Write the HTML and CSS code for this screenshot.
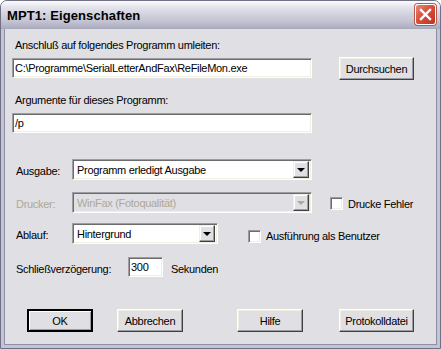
FILE: index.html
```html
<!DOCTYPE html>
<html>
<head>
<meta charset="utf-8">
<link rel="stylesheet" href="styles.css">
</head>
<body>
<div class="window">
  <div class="titlebar">
    <span class="title">MPT1: Eigenschaften</span>
    <span class="close"><svg width="13" height="13" viewBox="0 0 13 13"><path d="M2 2 L11 11 M11 2 L2 11" stroke="#fff" stroke-width="2.4" stroke-linecap="square"/></svg></span>
  </div>
  <div class="content">
    <div class="label l1">Anschluß auf folgendes Programm umleiten:</div>
    <div class="row r1">
      <div class="edit path">C:\Programme\SerialLetterAndFax\ReFileMon.exe</div>
      <div class="btn w75 browse">Durchsuchen</div>
    </div>
    <div class="label l2">Argumente für dieses Programm:</div>
    <div class="row r2"><div class="edit path">/p</div></div>
    <div class="row r3">
      <span class="lbl">Ausgabe:</span>
      <div class="combo long"><span class="val">Programm erledigt Ausgabe</span><span class="drop"><span class="arrow"></span></span></div>
    </div>
    <div class="row r4">
      <span class="lbl disabled">Drucker:</span>
      <div class="combo long off"><span class="val">WinFax (Fotoqualität)</span><span class="drop"><span class="arrow"></span></span></div>
      <span class="check c1"></span><span class="chklbl">Drucke Fehler</span>
    </div>
    <div class="row r5">
      <span class="lbl">Ablauf:</span>
      <div class="combo short"><span class="val">Hintergrund</span><span class="drop"><span class="arrow"></span></span></div>
      <span class="check c2"></span><span class="chklbl">Ausführung als Benutzer</span>
    </div>
    <div class="row r6">
      <span class="lbl">Schließverzögerung:</span>
      <div class="edit num">300</div>
      <span class="unit">Sekunden</span>
    </div>
    <div class="row buttons">
      <div class="btn w66 def">OK</div>
      <div class="btn w66 cancel">Abbrechen</div>
      <div class="btn w66 help">Hilfe</div>
      <div class="btn w75 log">Protokolldatei</div>
    </div>
  </div>
</div>
</body>
</html>
```
FILE: styles.css
```css
* { box-sizing: border-box; }
html, body { margin: 0; padding: 0; background: #fff; }
body { font-family: "Liberation Sans", Arial, sans-serif; font-size: 11px; letter-spacing: -0.3px; color: #000; }

.window {
  width: 441px; height: 349px;
  border: 1px solid #6f6f86;
  border-radius: 7px 7px 0 0;
  background: #e0dfe3;
  display: flex; flex-direction: column;
  overflow: hidden;
}
.titlebar {
  height: 28px; flex: none;
  display: flex; align-items: center; justify-content: space-between;
  padding: 0 4px 0 6px;
  background: linear-gradient(#fdfdfe 0%, #e6e6ee 20%, #d2d2de 50%, #c3c3d2 75%, #aeaec2 100%);
  border-bottom: 1px solid #a9a9bd;
}
.title { font-weight: bold; font-size: 13px; color: #000; letter-spacing: 0.1px; margin-top: 1px; }
.close {
  width: 21px; height: 21px;
  border: 1px solid #fff; border-radius: 3px;
  background: linear-gradient(135deg, #e98a78 0%, #d9503c 45%, #b93422 100%);
  box-shadow: 0 0 0 1px #b45a50;
  display: flex; align-items: center; justify-content: center;
}
.content {
  flex: 1;
  border-left: 3px solid #c4c4d4;
  border-right: 3px solid #c4c4d4;
  border-bottom: 3px solid #c4c4d4;
  box-shadow: inset 1px 0 #8e8ea4, inset -1px 0 #8e8ea4, inset 0 -1px #8e8ea4;
  padding: 10px 0 0 8px;
}
.label { height: 13px; line-height: 13px; margin-left: 3px; }
.row { display: flex; align-items: center; }
.edit {
  height: 20px; background: #fff;
  border: 1px solid; border-color: #9d9da1 #fff #fff #9d9da1;
  box-shadow: inset 1px 1px #6c6c6c, inset -1px -1px #f1efe2;
  padding: 0 3px 0 2px; line-height: 18px; white-space: nowrap; overflow: hidden;
}
.path { width: 300px; }
.r1 { margin-top: 5px; align-items: flex-start; }
.r1 .edit { margin-top: 1px; }
.browse { margin-left: 27px; }
.l2 { margin-top: 14px; }
.r2 { margin-top: 6px; }

.btn {
  height: 23px; display: flex; align-items: center; justify-content: center;
  border: 1px solid; border-color: #fff #404040 #404040 #fff;
  box-shadow: inset -1px -1px #9d9da1, inset 1px 1px #f1efe2;
  background: #e0dfe3;
}
.w75 { width: 75px; }
.w66 { width: 66px; }
.def { border: 2px solid #000; box-shadow: inset 1px 1px #fff, inset -1px -1px #9d9da1; }

.lbl { width: 56px; flex: none; margin-left: 4px; padding-top: 3px; }
.disabled { color: #aca899; }
.combo {
  height: 21px; display: flex; align-items: center; justify-content: space-between;
  background: #fff; flex: none;
  border: 1px solid; border-color: #9d9da1 #fff #fff #9d9da1;
  box-shadow: inset 1px 1px #6c6c6c, inset -1px -1px #f1efe2;
  padding: 2px 2px 2px 4px;
}
.combo .val { line-height: 15px; padding-top: 1px; }
.long { width: 240px; }
.short { width: 146px; }
.drop {
  width: 16px; height: 17px; background: #e0dfe3;
  border: 1px solid; border-color: #f1efe2 #404040 #404040 #f1efe2;
  box-shadow: inset -1px -1px #9d9da1, inset 1px 1px #fff;
  display: flex; align-items: center; justify-content: center;
}
.arrow { width: 0; height: 0; border-left: 4px solid transparent; border-right: 4px solid transparent; border-top: 4px solid #000; margin-top: 1px; }
.off { background: #e0dfe3; color: #aca899; }
.off .arrow { border-top-color: #aca899; }
.r3 { margin-top: 26px; }
.r4 { margin-top: 12px; }
.r5 { margin-top: 10px; }
.check {
  width: 13px; height: 13px; background: #fff; flex: none;
  border: 1px solid; border-color: #9d9da1 #fff #fff #9d9da1;
  box-shadow: inset 1px 1px #6c6c6c, inset -1px -1px #f1efe2;
}
.c1 { margin-left: 18px; margin-top: 2px; }
.c2 { margin-left: 30px; align-self: flex-start; margin-top: 7px; }
.chklbl { margin-left: 5px; padding-top: 2px; }
.r5 .chklbl { align-self: flex-start; padding-top: 7px; }
.r6 { margin-top: 13px; }
.r6 .lbl { width: 112px; }
.num { width: 35px; }
.unit { margin-left: 8px; padding-top: 3px; }
.buttons { margin-top: 32px; padding-left: 15px; }
.cancel { margin-left: 24px; }
.help { margin-left: 54px; }
.log { margin-left: 36px; }
```
